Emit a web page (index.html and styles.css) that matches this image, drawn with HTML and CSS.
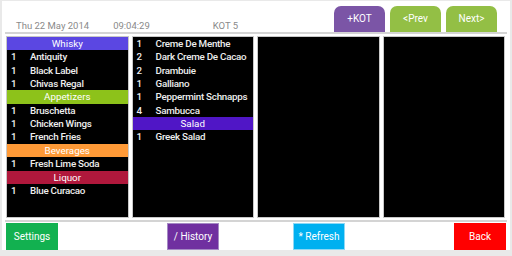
FILE: index.html
```html
<!DOCTYPE html>
<html>
  <head>
    <title>KOT</title>
    <link rel="stylesheet" href="styles.css">
  </head>
  <body>
    <div class="frame">
      <div class="top">
        <span class="info date">Thu 22 May 2014</span>
        <span class="info time">09:04:29</span>
        <span class="info kot">KOT 5</span>
        <div class="tabs">
          <button class="tab tab-kot">+KOT</button>
          <button class="tab tab-nav">&lt;Prev</button>
          <button class="tab tab-nav">Next&gt;</button>
        </div>
      </div>
      <div class="cols">
        <div class="col">
          <div class="cat whisky">Whisky</div>
          <div class="item"><span class="qty">1</span><span>Antiquity</span></div>
          <div class="item"><span class="qty">1</span><span>Black Label</span></div>
          <div class="item"><span class="qty">1</span><span>Chivas Regal</span></div>
          <div class="cat appetizers">Appetizers</div>
          <div class="item"><span class="qty">1</span><span>Bruschetta</span></div>
          <div class="item"><span class="qty">1</span><span>Chicken Wings</span></div>
          <div class="item"><span class="qty">1</span><span>French Fries</span></div>
          <div class="cat beverages">Beverages</div>
          <div class="item"><span class="qty">1</span><span>Fresh Lime Soda</span></div>
          <div class="cat liquor">Liquor</div>
          <div class="item"><span class="qty">1</span><span>Blue Curacao</span></div>
        </div>
        <div class="col">
          <div class="item"><span class="qty">1</span><span>Creme De Menthe</span></div>
          <div class="item"><span class="qty">2</span><span>Dark Creme De Cacao</span></div>
          <div class="item"><span class="qty">2</span><span>Drambuie</span></div>
          <div class="item"><span class="qty">1</span><span>Galliano</span></div>
          <div class="item"><span class="qty">1</span><span>Peppermint Schnapps</span></div>
          <div class="item"><span class="qty">4</span><span>Sambucca</span></div>
          <div class="cat salad">Salad</div>
          <div class="item"><span class="qty">1</span><span>Greek Salad</span></div>
        </div>
        <div class="col"></div>
        <div class="col"></div>
      </div>
      <div class="bottom">
        <button class="btn settings">Settings</button>
        <button class="btn history">/ History</button>
        <button class="btn refresh">* Refresh</button>
        <button class="btn back">Back</button>
      </div>
    </div>
  </body>
</html>
```

FILE: styles.css
```css
body {
  margin: 0;
  background-color: #e9e9e9;
  font-family: Roboto, "Liberation Sans", sans-serif;
}

.frame {
  margin: 1px 2px 0 2px;
  height: 249px;
  background-color: #fff;
  display: flex;
  flex-direction: column;
}

.top {
  display: flex;
  align-items: flex-end;
  height: 31px;
  margin: 0 3px;
  border-bottom: 2px solid #d4d4d4;
}

.info {
  font-size: 9.5px;
  color: #8a8a8a;
  padding-bottom: 1px;
}

.date {
  margin-left: 11px;
}

.time {
  margin-left: 24px;
}

.kot {
  margin-left: 63px;
}

.tabs {
  display: flex;
  gap: 5px;
  margin-left: auto;
  margin-right: 10px;
}

.tab {
  width: 51px;
  height: 26px;
  border: none;
  border-radius: 7px 7px 0 0;
  color: #fff;
  font-family: Roboto, sans-serif;
  font-size: 10px;
  padding: 0;
}

.tab-kot {
  background-color: #7b55a6;
}

.tab-nav {
  background-color: #93bf45;
}

.cols {
  display: grid;
  grid-template-columns: repeat(4, 1fr);
  gap: 3px;
  margin: 2px 5px 0 4px;
  height: 184px;
}

.col {
  background-color: #000;
  border: 1px solid #c8c8c8;
  color: #eee;
  font-size: 9.8px;
  font-weight: 500;
  letter-spacing: -0.25px;
}

.cat {
  height: 13.4px;
  line-height: 13.4px;
  text-align: center;
  color: #fff;
  font-weight: 400;
  letter-spacing: 0;
}

.item {
  display: flex;
  height: 13.4px;
  line-height: 13.4px;
}

.qty {
  width: 19px;
  padding-left: 4px;
}

.whisky {
  background-color: #5b47e2;
}

.appetizers {
  background-color: #8dc21a;
}

.beverages {
  background-color: #ff9a37;
}

.liquor {
  background-color: #b0183c;
}

.salad {
  background-color: #5016c6;
}

.bottom {
  display: flex;
  margin: 2px 3px 0 3px;
  padding: 1px 0 0 1px;
  border-top: 2px solid #d4d4d4;
}

.btn {
  width: 52px;
  height: 27px;
  border: 1px solid transparent;
  color: #fff;
  font-family: Roboto, sans-serif;
  font-size: 10px;
  padding: 0;
}

.settings {
  background-color: #12b150;
}

.history {
  background-color: #7030a0;
  border-color: #a58ac4;
  margin-left: 109px;
}

.refresh {
  background-color: #00b0f0;
  border-color: #8fd8f5;
  margin-left: 74px;
}

.back {
  background-color: #ff0000;
  margin-left: 109px;
}
```
